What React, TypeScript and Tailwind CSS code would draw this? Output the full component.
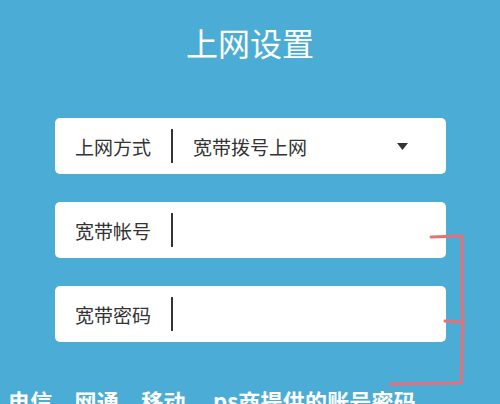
import React from "react"

const font = { fontFamily: '"Noto Sans CJK SC", "Noto Sans", sans-serif' }

function Field({ label, value, select }: { label: string; value?: string; select?: boolean }) {
  return (
    <div className="flex h-[56px] items-center rounded-[5px] bg-white pl-[20px] pr-[38px]">
      <span className="w-[77px] shrink-0 text-[19px] leading-none text-[#333]">{label}</span>
      <span className="ml-[19px] h-[34px] w-[2px] shrink-0 bg-[#333]" />
      <span className="ml-[20px] flex-1 text-[19px] leading-none text-[#333]">{value}</span>
      {select ? (
        <svg width="11" height="7" viewBox="0 0 11 7" className="shrink-0">
          <path d="M0 0 H11 L5.5 7 Z" fill="#333" />
        </svg>
      ) : null}
    </div>
  )
}

export default function App() {
  return (
    <div className="relative h-[404px] w-[500px] overflow-hidden bg-[#4badd5]" style={font}>
      <div className="flex h-[84px] items-center justify-center">
        <h1 className="text-[32px] font-normal leading-none text-white">上网设置</h1>
      </div>

      <div className="mx-[54px] mt-[34px] ml-[55px] flex flex-col gap-[28px]">
        <Field label="上网方式" value="宽带拨号上网" select />
        <Field label="宽带帐号" />
        <Field label="宽带密码" />
      </div>

      <p className="mt-[47px] whitespace-nowrap pl-[8px] text-[22px] font-bold leading-none tracking-[0.2px] text-white">
        电信、网通、移动、 ps商提供的账号密码
      </p>

      <svg className="pointer-events-none absolute left-0 top-0" width="500" height="404" viewBox="0 0 500 404">
        <path
          d="M431 237 L462 236 L462 300 L463 322 L461 383 L390 384 M445 321 L463 322"
          fill="none"
          stroke="#e4717a"
          strokeWidth="3"
          strokeLinecap="round"
          strokeLinejoin="round"
        />
      </svg>
    </div>
  )
}
